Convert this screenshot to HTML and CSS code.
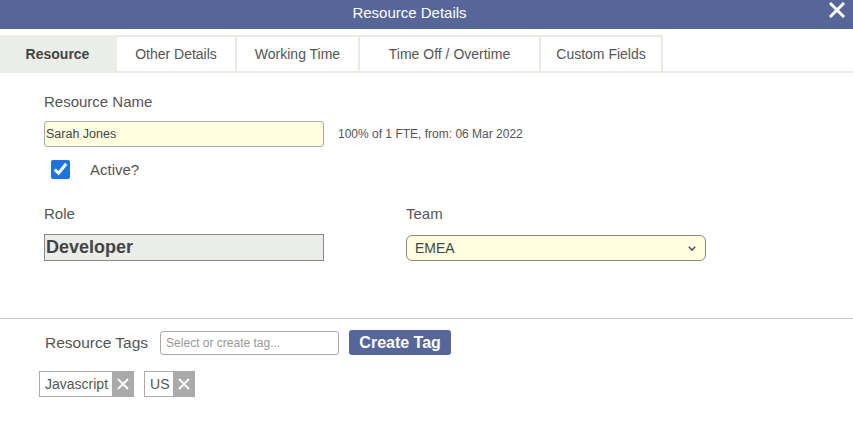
FILE: index.html
```html
<!DOCTYPE html>
<html>
<head>
<meta charset="utf-8">
<link rel="stylesheet" href="styles.css">
</head>
<body>
<div class="dialog">
  <div class="titlebar">
    <span class="title">Resource Details</span>
    <span class="close" aria-label="close">
      <svg width="16" height="16" viewBox="0 0 16 16"><path d="M2 2 L14 14 M14 2 L2 14" stroke="#fff" stroke-width="3" stroke-linecap="square"/></svg>
    </span>
  </div>
  <div class="tabs">
    <div class="tab tab-resource active">Resource</div>
    <div class="tab tab-other">Other Details</div>
    <div class="tab tab-working">Working Time</div>
    <div class="tab tab-timeoff">Time Off / Overtime</div>
    <div class="tab tab-custom">Custom Fields</div>
  </div>
  <div class="content">
    <div class="label label-name">Resource Name</div>
    <div class="name-row">
      <input class="name-input" type="text" value="Sarah Jones">
      <span class="fte">100% of 1 FTE, from: 06 Mar 2022</span>
    </div>
    <label class="active-row">
      <input class="check" type="checkbox" checked>
      <span>Active?</span>
    </label>
    <div class="two-col">
      <div class="col">
        <div class="label">Role</div>
        <div class="role-box">Developer</div>
      </div>
      <div class="col">
        <div class="label">Team</div>
        <div class="team-select">
          <span>EMEA</span>
          <svg width="10" height="7" viewBox="0 0 10 7"><path d="M1.8 1.8 L5 5 L8.2 1.8" fill="none" stroke="#555" stroke-width="1.6"/></svg>
        </div>
      </div>
    </div>
  </div>
  <div class="divider"></div>
  <div class="tags-section">
    <div class="tags-row">
      <span class="label tags-label">Resource Tags</span>
      <input class="tag-input" type="text" placeholder="Select or create tag...">
      <button class="create-btn">Create Tag</button>
    </div>
    <div class="tag-list">
      <span class="tag"><span class="tag-text">Javascript</span><span class="tag-x"><svg width="12" height="12" viewBox="0 0 12 12"><path d="M1 1 L11 11 M11 1 L1 11" stroke="#fff" stroke-width="2"/></svg></span></span>
      <span class="tag"><span class="tag-text">US</span><span class="tag-x"><svg width="12" height="12" viewBox="0 0 12 12"><path d="M1 1 L11 11 M11 1 L1 11" stroke="#fff" stroke-width="2"/></svg></span></span>
    </div>
  </div>
</div>
</body>
</html>
```
FILE: styles.css
```css
* { box-sizing: border-box; }
body {
  margin: 0;
  background: #fff;
  font-family: "Liberation Sans", Arial, sans-serif;
  color: #555;
}
.dialog { width: 853px; }
.titlebar {
  height: 29px;
  background: #566699;
  display: flex;
  align-items: center;
  justify-content: center;
  padding-right: 34px;
  position: relative;
}
.title {
  color: #fff;
  font-size: 15px;
  line-height: 16px;
  margin-top: -3px;
}
.close {
  position: absolute;
  right: 8px;
  top: 2px;
  width: 16px;
  height: 16px;
  display: block;
}
.close svg { display: block; }
.tabs {
  margin-top: 6px;
  display: flex;
  border-bottom: 2px solid #ebebe6;
  height: 38px;
}
.tab {
  height: 36px;
  border: 2px solid #ebebe6;
  border-bottom: none;
  border-left: none;
  display: flex;
  align-items: center;
  justify-content: center;
  font-size: 14px;
  color: #555;
}
.tab.active {
  background: #ebede8;
  font-weight: bold;
  color: #444;
  border-color: #ebede8;
}
.tab-resource { width: 117px; }
.tab-other { width: 120px; }
.tab-working { width: 123px; }
.tab-timeoff { width: 181px; }
.tab-custom { width: 122px; }
.content { padding-left: 44px; }
.label {
  font-size: 15px;
  line-height: 18px;
  color: #555;
}
.label-name { margin-top: 20px; }
.name-row {
  margin-top: 10px;
  display: flex;
  align-items: center;
}
.name-input {
  width: 280px;
  height: 26px;
  border: 1px solid #aaa;
  border-radius: 3px;
  background: #ffffe0;
  font-family: "Liberation Sans", Arial, sans-serif;
  font-size: 12.5px;
  color: #444;
  padding: 0 0 0 1px;
  margin: 0;
  outline: none;
}
.fte {
  margin-left: 14px;
  font-size: 12px;
  color: #555;
}
.active-row {
  display: flex;
  align-items: center;
  margin-top: 12px;
  height: 20px;
  font-size: 15px;
  color: #555;
}
.check {
  width: 19px;
  height: 19px;
  margin: 0 0 0 7px;
  accent-color: #1a73e8;
}
.active-row span { margin-left: 20px; }
.two-col {
  display: grid;
  grid-template-columns: 362px 300px;
  margin-top: 26px;
}
.role-box {
  margin-top: 11px;
  width: 280px;
  height: 27px;
  border: 1px solid #888;
  background: #ebede8;
  font-weight: bold;
  font-size: 18px;
  color: #444;
  display: flex;
  align-items: center;
  padding-left: 1px;
}
.team-select {
  margin-top: 12px;
  width: 300px;
  height: 26px;
  border: 1px solid #888;
  border-radius: 6px;
  background: #ffffe0;
  display: flex;
  align-items: center;
  justify-content: space-between;
  padding: 0 8px 0 8px;
  font-size: 14px;
  color: #444;
}
.team-select svg { display: block; }
.divider {
  margin-top: 57px;
  height: 1px;
  background: #c8c8c8;
}
.tags-section { padding-left: 39px; }
.tags-row {
  display: flex;
  align-items: center;
  margin-top: 11px;
  height: 25px;
}
.tags-label {
  margin-left: 6px;
  margin-right: 10px;
  font-size: 15.5px;
}
.tag-input {
  width: 179px;
  height: 24px;
  border: 1px solid #aaa;
  border-radius: 3px;
  margin: 0 0 0 2px;
  padding: 0 5px;
  font-family: "Liberation Sans", Arial, sans-serif;
  font-size: 12px;
  color: #444;
  outline: none;
}
.tag-input::placeholder { color: #999; }
.create-btn {
  margin-left: 10px;
  width: 102px;
  height: 25px;
  border: none;
  border-radius: 3px;
  background: #566699;
  color: #fff;
  font-family: "Liberation Sans", Arial, sans-serif;
  font-weight: bold;
  font-size: 16px;
  padding: 0;
}
.tag-list {
  display: flex;
  gap: 10px;
  margin-top: 16px;
}
.tag {
  display: flex;
  height: 26px;
  border: 1px solid #aaa;
  background: #fff;
}
.tag-text {
  font-size: 14px;
  color: #555;
  padding: 0 4px 0 5px;
  display: flex;
  align-items: center;
}
.tag-x {
  width: 21px;
  background: #aaa;
  display: flex;
  align-items: center;
  justify-content: center;
}
.tag-x svg { display: block; }
```
